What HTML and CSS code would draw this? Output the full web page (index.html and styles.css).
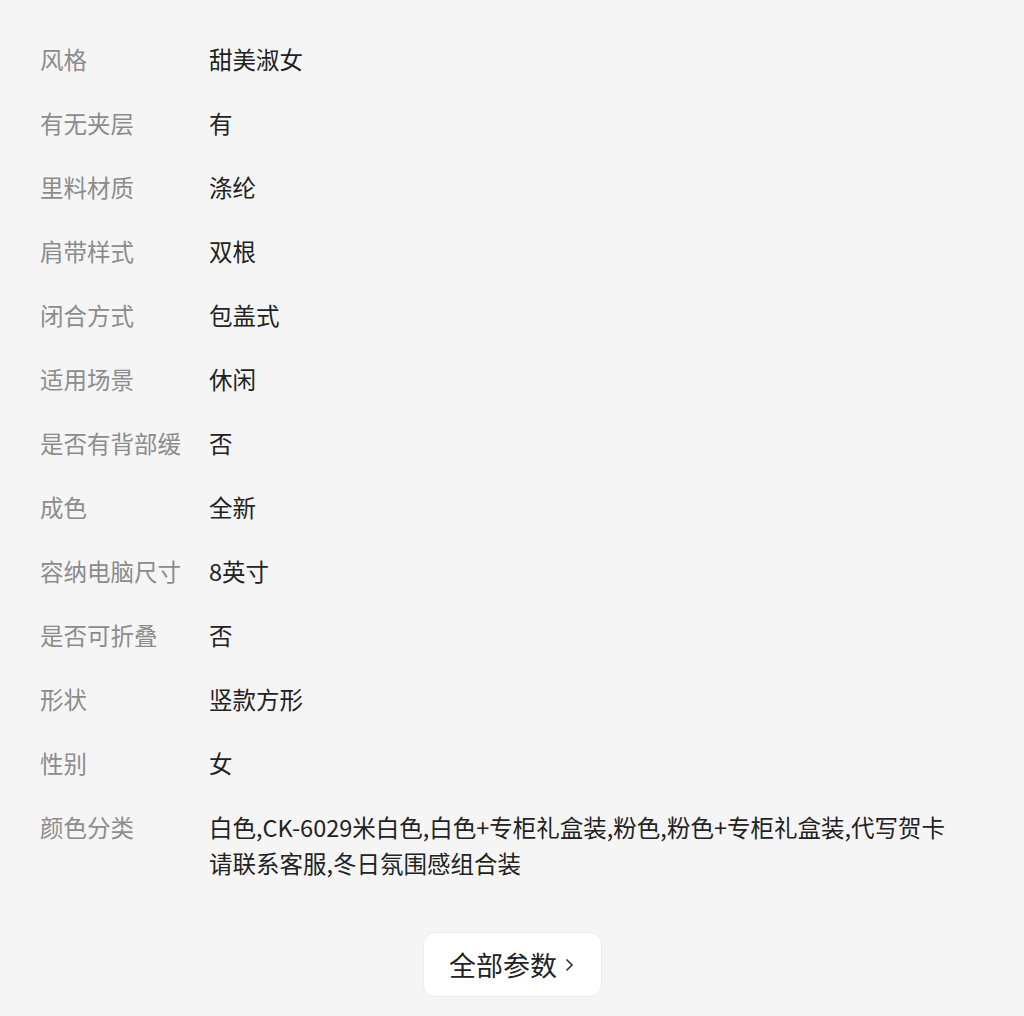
FILE: index.html
```html
<!DOCTYPE html>
<html lang="zh-CN">
<head>
    <meta charset="UTF-8">
    <meta name="viewport" content="width=device-width, initial-scale=1.0">
    <title>商品参数</title>
    <link rel="stylesheet" href="styles.css">
</head>
<body>
    <div class="container">
        <div class="params">
            <div class="row"><div class="label">风格</div><div class="value">甜美淑女</div></div>
            <div class="row"><div class="label">有无夹层</div><div class="value">有</div></div>
            <div class="row"><div class="label">里料材质</div><div class="value">涤纶</div></div>
            <div class="row"><div class="label">肩带样式</div><div class="value">双根</div></div>
            <div class="row"><div class="label">闭合方式</div><div class="value">包盖式</div></div>
            <div class="row"><div class="label">适用场景</div><div class="value">休闲</div></div>
            <div class="row"><div class="label">是否有背部缓</div><div class="value">否</div></div>
            <div class="row"><div class="label">成色</div><div class="value">全新</div></div>
            <div class="row"><div class="label">容纳电脑尺寸</div><div class="value">8英寸</div></div>
            <div class="row"><div class="label">是否可折叠</div><div class="value">否</div></div>
            <div class="row"><div class="label">形状</div><div class="value">竖款方形</div></div>
            <div class="row"><div class="label">性别</div><div class="value">女</div></div>
            <div class="row"><div class="label">颜色分类</div><div class="value">白色,CK-6029米白色,白色+专柜礼盒装,粉色,粉色+专柜礼盒装,代写贺卡请联系客服,冬日氛围感组合装</div></div>
        </div>
        <div class="more">
            <button class="btn">全部参数
                <svg class="chevron" width="10" height="16" viewBox="0 0 10 16"><path d="M2.5 2.5 L8 8 L2.5 13.5" fill="none" stroke="#333" stroke-width="1.6"/></svg>
            </button>
        </div>
    </div>
</body>
</html>
```

FILE: styles.css
```css
body {
    margin: 0;
    padding: 0;
    background: #f5f5f5;
    font-family: 'Noto Sans CJK SC', 'Noto Sans', sans-serif;
}
.container {
    padding: 28px 40px 0 40px;
}
.row {
    display: flex;
    padding: 13px 0 15px;
    font-size: 23.5px;
    line-height: 36px;
}
.label {
    width: 169px;
    flex-shrink: 0;
    color: #8c8c8c;
}
.value {
    color: #222;
    flex: 1;
    max-width: 748px;
}
.more {
    display: flex;
    justify-content: center;
    margin-top: 36px;
}
.btn {
    display: flex;
    align-items: center;
    gap: 7px;
    height: 65px;
    padding: 0 27px 0 25px;
    background: #fff;
    border: 1px solid #ececec;
    border-radius: 12px;
    font-family: inherit;
    font-size: 27px;
    color: #222;
    margin-left: 1px;
}
```
